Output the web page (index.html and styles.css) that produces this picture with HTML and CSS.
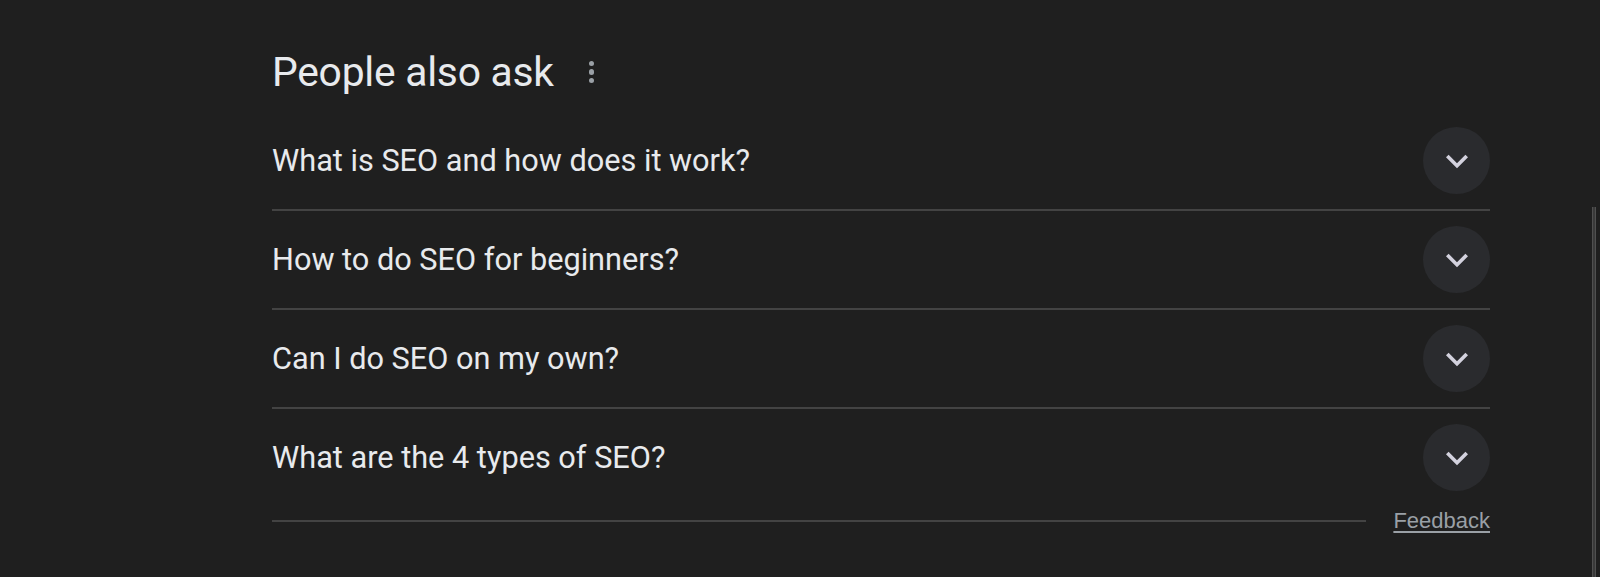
FILE: index.html
```html
<!DOCTYPE html>
<html lang="en">
<head>
<meta charset="utf-8">
<title>People also ask</title>
<link rel="stylesheet" href="styles.css">
</head>
<body>
<div class="page">
  <section class="paa">
    <header class="paa-head">
      <h2 class="paa-title">People also ask</h2>
      <span class="kebab" aria-label="More options"><i></i><i></i><i></i></span>
    </header>
    <div class="paa-list">
      <div class="paa-row">
        <span class="q">What is SEO and how does it work?</span>
        <span class="toggle"><svg viewBox="0 0 24 24" width="44" height="44"><path d="M16.59 8.59L12 13.17 7.41 8.59 6 10l6 6 6-6z"/></svg></span>
      </div>
      <div class="paa-row">
        <span class="q">How to do SEO for beginners?</span>
        <span class="toggle"><svg viewBox="0 0 24 24" width="44" height="44"><path d="M16.59 8.59L12 13.17 7.41 8.59 6 10l6 6 6-6z"/></svg></span>
      </div>
      <div class="paa-row">
        <span class="q">Can I do SEO on my own?</span>
        <span class="toggle"><svg viewBox="0 0 24 24" width="44" height="44"><path d="M16.59 8.59L12 13.17 7.41 8.59 6 10l6 6 6-6z"/></svg></span>
      </div>
      <div class="paa-row">
        <span class="q">What are the 4 types of SEO?</span>
        <span class="toggle"><svg viewBox="0 0 24 24" width="44" height="44"><path d="M16.59 8.59L12 13.17 7.41 8.59 6 10l6 6 6-6z"/></svg></span>
      </div>
    </div>
    <footer class="paa-foot">
      <span class="foot-line"></span>
      <a class="feedback" href="#">Feedback</a>
    </footer>
  </section>
  <div class="scrollbar"></div>
</div>
</body>
</html>
```
FILE: styles.css
```css
html, body {
  margin: 0;
  padding: 0;
  background: #1f1f1f;
}
body {
  width: 1600px;
  height: 577px;
  overflow: hidden;
  font-family: Roboto, "Liberation Sans", Arial, sans-serif;
  color: #e8eaed;
}
.page {
  position: relative;
  height: 577px;
  padding-left: 272px;
  padding-top: 40px;
  box-sizing: border-box;
}
.paa {
  width: 1218px;
}
.paa-head {
  height: 64px;
  display: flex;
  align-items: center;
  margin-bottom: 8px;
}
.paa-title {
  margin: 0;
  font-weight: 400;
  font-size: 40.8px;
  line-height: 48px;
  color: #e8eaed;
  letter-spacing: -0.25px;
}
.kebab {
  display: flex;
  flex-direction: column;
  gap: 3px;
  margin-left: 35px;
}
.kebab i {
  display: block;
  width: 5.5px;
  height: 5.5px;
  border-radius: 50%;
  background: #9aa0a6;
}
.paa-row {
  height: 97px;
  display: flex;
  align-items: center;
  justify-content: space-between;
  border-bottom: 2px solid #434343;
}
.paa-row:last-child {
  border-bottom: none;
}
.q {
  font-size: 30.7px;
  line-height: 40px;
  color: #e8eaed;
}
.toggle {
  width: 67px;
  height: 67px;
  border-radius: 50%;
  background: #2a2b2e;
  display: flex;
  align-items: center;
  justify-content: center;
}
.toggle svg {
  fill: #d3d2de;
}
.paa-foot {
  height: 30px;
  display: flex;
  align-items: center;
}
.foot-line {
  flex: 1;
  height: 2px;
  background: #434343;
  margin-right: 27px;
}
.feedback {
  font-family: "Liberation Sans", Arial, sans-serif;
  font-size: 22px;
  line-height: 30px;
  color: #9aa0a6;
  text-decoration: underline;
  text-underline-offset: 3px;
}
.scrollbar {
  position: absolute;
  left: 1592px;
  top: 207px;
  bottom: 0;
  width: 2px;
  background: #3a3a3a;
  border-left: 1px solid #505050;
  border-right: 1px solid #505050;
}
```
